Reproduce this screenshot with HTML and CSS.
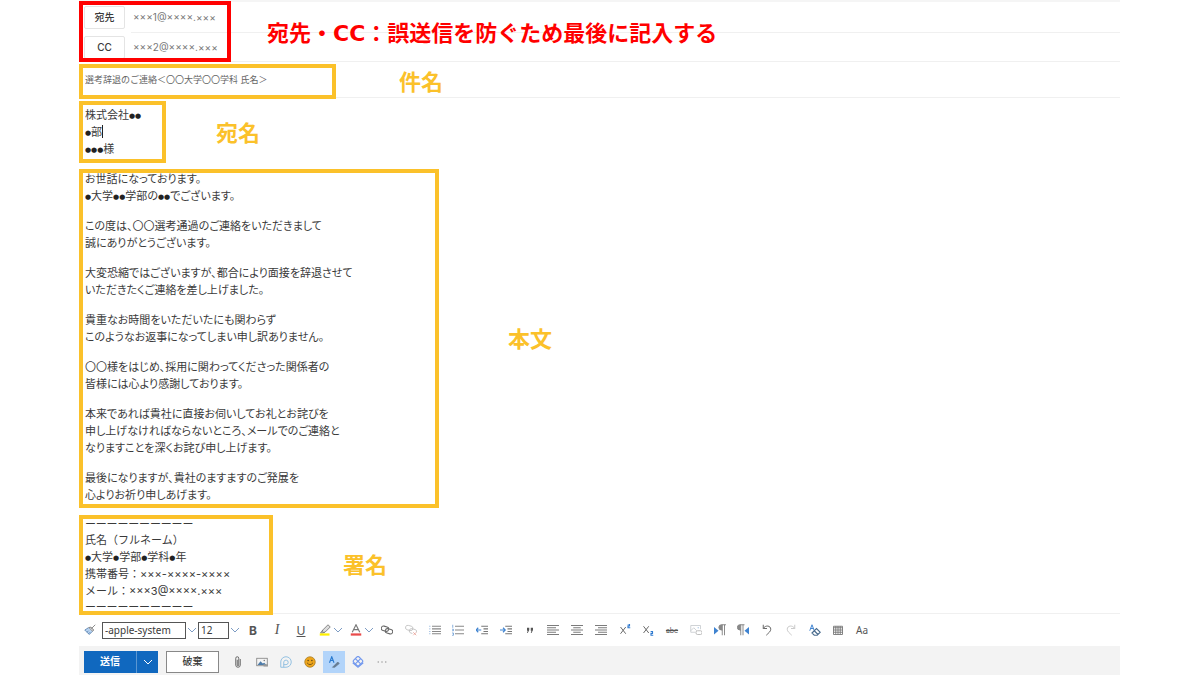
FILE: index.html
```
<!DOCTYPE html>
<html lang="ja">
<head>
<meta charset="utf-8">
<meta name="viewport" content="width=device-width, initial-scale=1">
<title>選考辞退のご連絡</title>
<link rel="stylesheet" href="styles.css">
</head>
<body>
<main class="composer">
  <section class="recipients">
    <div class="recipient">
      <button class="field-button" type="button" id="to">宛先</button>
      <div class="recipient-value"><input class="address" type="text" value="×××1@××××.×××" aria-labelledby="to"></div>
    </div>
    <div class="recipient">
      <button class="field-button" type="button" id="cc">CC</button>
      <div class="recipient-value"><input class="address" type="text" value="×××2@××××.×××" aria-labelledby="cc"></div>
    </div>
    <div class="recipients-frame"></div>
    <strong class="note note-red recipients-note">宛先・CC：誤送信を防ぐため最後に記入する</strong>
  </section>

  <section class="row subject-row">
    <div class="frame subject-frame"><input class="subject" type="text" aria-label="件名" value="選考辞退のご連絡＜〇〇大学〇〇学科 氏名＞"></div>
    <strong class="note subject-note">件名</strong>
  </section>

  <section class="row addressee-row">
    <div class="frame addressee-frame">
      <p>株式会社<span class="dot">●●</span></p>
      <p><span class="dot">●</span>部<span class="caret"></span></p>
      <p><span class="dot">●●●</span>様</p>
    </div>
    <strong class="note addressee-note">宛名</strong>
  </section>

  <section class="row letter-row">
    <div class="frame letter-frame">
      <p>お世話になっております。<br><span class="dot">●</span>大学<span class="dot">●●</span>学部の<span class="dot">●●</span>でございます。</p>
      <p>この度は、〇〇選考通過のご連絡をいただきまして<br>誠にありがとうございます。</p>
      <p>大変恐縮ではございますが、都合により面接を辞退させて<br>いただきたくご連絡を差し上げました。</p>
      <p>貴重なお時間をいただいたにも関わらず<br>このようなお返事になってしまい申し訳ありません。</p>
      <p>〇〇様をはじめ、採用に関わってくださった関係者の<br>皆様には心より感謝しております。</p>
      <p>本来であれば貴社に直接お伺いしてお礼とお詫びを<br>申し上げなければならないところ、メールでのご連絡と<br>なりますことを深くお詫び申し上げます。</p>
      <p>最後になりますが、貴社のますますのご発展を<br>心よりお祈り申しあげます。</p>
    </div>
    <strong class="note letter-note">本文</strong>
  </section>

  <section class="row signature-row">
    <div class="frame signature-frame">
      <p class="rule">ーーーーーーーーーー</p>
      <p>氏名（フルネーム）</p>
      <p><span class="dot">●</span>大学<span class="dot">●</span>学部<span class="dot">●</span>学科<span class="dot">●</span>年</p>
      <p>携帯番号：×××-××××-××××</p>
      <p>メール：×××3@××××.×××</p>
      <p class="rule">ーーーーーーーーーー</p>
    </div>
    <strong class="note signature-note">署名</strong>
  </section>

  <div class="toolbar" role="toolbar" aria-label="書式">
    <button class="tool" type="button" aria-label="書式のコピー"><svg viewBox="0 0 16 16"><path d="M15 1 10 6M9 4l4 4-2 2-5-5z" fill="#ccc" stroke="#666"/><path d="M6 5 1 8l6 6 4-4" fill="#b8d3f1" stroke="#4d78a8"/><path d="m4 11 2-2m0 4 2-2" stroke="#4d78a8"/></svg></button>
    <select class="font-name" aria-label="フォント"><option>-apple-system</option></select>
    <svg class="chevron" viewBox="0 0 10 10"><path d="m1 3 4 4 4-4"/></svg>
    <select class="font-size" aria-label="フォント サイズ"><option>12</option></select>
    <svg class="chevron" viewBox="0 0 10 10"><path d="m1 3 4 4 4-4"/></svg>
    <div class="text-tools">
      <button class="tool bold" type="button" aria-label="太字">B</button>
      <button class="tool italic" type="button" aria-label="斜体">I</button>
      <button class="tool underline" type="button" aria-label="下線">U</button>
    </div>
    <button class="tool color-tool" type="button" aria-label="蛍光ペン"><svg viewBox="0 0 16 16"><path d="m5 8 7-7 3 3-7 7H5zM5 8l-3 4h4l2-2" fill="#ddd" stroke="#666"/><path d="M1 14h13" stroke="#fff000" stroke-width="3"/></svg><svg class="chevron" viewBox="0 0 10 10"><path d="m1 3 4 4 4-4"/></svg></button>
    <button class="tool color-tool" type="button" aria-label="フォントの色"><svg viewBox="0 0 16 16"><path d="M3 11 8 1l5 10M5 7.500h6" stroke="#777" stroke-width="1.500"/><path d="M1 14h14" stroke="#e94b4b" stroke-width="3"/></svg><svg class="chevron" viewBox="0 0 10 10"><path d="m1 3 4 4 4-4"/></svg></button>
    <div class="tool-group">
      <button class="tool" type="button" aria-label="リンク"><svg viewBox="0 0 16 16"><g transform="rotate(15 8 8)" stroke="#666" stroke-width="1.400"><rect x="0" y="4" width="10" height="6" rx="3"/><rect x="6" y="6" width="10" height="6" rx="3"/></g></svg></button>
      <button class="tool" type="button" aria-label="リンクの解除"><svg viewBox="0 0 16 16"><g transform="rotate(15 8 8)"><rect x="0" y="3" width="10" height="6" rx="3" stroke="#bbb"/><path d="M11 12H9a3 3 0 0 1 0-6h4a3 3 0 0 1 3 3" stroke="#bbb"/></g><path d="m11 11 4 4m0-4-4 4" stroke="#e79a8f"/></svg></button>
      <button class="tool" type="button" aria-label="箇条書き"><svg viewBox="0 0 16 16"><path d="M0 3h2M0 6.500h2M0 10h2M0 13h2" stroke="#8fb3dc"/><path d="M4 3h12M4 6.500h12M4 10h12M4 13h12" stroke="#888" stroke-width="1.500"/></svg></button>
      <button class="tool" type="button" aria-label="段落番号"><svg viewBox="0 0 16 16"><path d="M1 1v4M0 7h2v2H0M0 12h2v3H0" stroke="#5f94d0"/><path d="M4 3h12M4 8h12M4 13h12" stroke="#888" stroke-width="1.500"/></svg></button>
      <button class="tool" type="button" aria-label="インデント解除"><svg viewBox="0 0 16 16"><path d="M7 8H0m3-3L0 8l3 3" stroke="#3f83d0" stroke-width="1.500"/><path d="M7 3h9M10 6.500h6M10 10h6M7 13h9" stroke="#777" stroke-width="1.500"/></svg></button>
      <button class="tool" type="button" aria-label="インデント"><svg viewBox="0 0 16 16"><path d="M0 8h7M4 5l3 3-3 3" stroke="#3f83d0" stroke-width="1.500"/><path d="M7 3h9M10 6.500h6M10 10h6M7 13h9" stroke="#777" stroke-width="1.500"/></svg></button>
      <button class="tool" type="button" aria-label="引用"><svg viewBox="0 0 16 16"><path d="M4 5h3v3l-2 4H4l1-3H4zM9 5h3v3l-2 4H9l1-3H9z" fill="#555"/></svg></button>
      <button class="tool" type="button" aria-label="左揃え"><svg viewBox="0 0 16 16"><path d="M0 2h16M0 5h12M0 8h16M0 11h12M0 14h16" stroke="#777" stroke-width="1.300"/></svg></button>
      <button class="tool" type="button" aria-label="中央揃え"><svg viewBox="0 0 16 16"><path d="M0 2h16M3 5h10M0 8h16M3 11h10M0 14h16" stroke="#777" stroke-width="1.300"/></svg></button>
      <button class="tool" type="button" aria-label="右揃え"><svg viewBox="0 0 16 16"><path d="M0 2h16M4 5h12M0 8h16M4 11h12M0 14h16" stroke="#777" stroke-width="1.300"/></svg></button>
      <button class="tool" type="button" aria-label="上付き"><svg viewBox="0 0 16 16"><path d="m2 4 7 9m0-9-7 9" stroke="#666" stroke-width="1.300"/><path d="M11.500 0H14v2.500h-2V5h3" stroke="#2f7ad0" stroke-width="1.500"/></svg></button>
      <button class="tool" type="button" aria-label="下付き"><svg viewBox="0 0 16 16"><path d="m2 3 7 9m0-9-7 9" stroke="#666" stroke-width="1.300"/><path d="M11.500 10H14v2.500h-2V15h3" stroke="#2f7ad0" stroke-width="1.500"/></svg></button>
      <button class="tool strike" type="button" aria-label="取り消し線">abc</button>
      <button class="tool" type="button" aria-label="画像"><svg viewBox="0 0 16 16"><path d="M7 11H1V2h13v5M1 9l4-4 4 4" stroke="#c0c4c8"/><rect x="8" y="9" width="8" height="5" rx="2" stroke="#aaa"/><circle cx="11" cy="5" r="1" fill="#b5cde8"/></svg></button>
      <button class="tool" type="button" aria-label="左から右"><svg viewBox="0 0 16 16"><path d="m0 4 6 5-6 5z" fill="#3f83d0"/><path d="M11 15V1m3 14V1m2 0h-6a3 3 0 0 0 0 7h1" stroke="#666"/><path d="M10 1h1v7h-1a3 3 0 0 1 0-7" fill="#888"/></svg></button>
      <button class="tool" type="button" aria-label="右から左"><svg viewBox="0 0 16 16"><path d="m16 4-6 5 6 5z" fill="#3f83d0"/><path d="M5 15V1m3 14V1m2 0H4a3 3 0 0 0 0 7h1" stroke="#666"/><path d="M4 1h1v7H4a3 3 0 0 1 0-7" fill="#888"/></svg></button>
      <button class="tool" type="button" aria-label="元に戻す"><svg viewBox="0 0 16 16"><path d="M3 1v5h5M3 6c3-5 10-4 10 1 0 3-3 5-6 8" stroke="#666" stroke-width="1.300"/></svg></button>
      <button class="tool" type="button" aria-label="やり直し"><svg viewBox="0 0 16 16"><path d="M13 1v5H8m5 0C10 1 3 2 3 7c0 3 3 5 6 8" stroke="#c8c8c8" stroke-width="1.300"/></svg></button>
      <button class="tool" type="button" aria-label="書式のクリア"><svg viewBox="0 0 16 16"><path d="m1 9 3-8 3 8M2 6h4" stroke="#3f83d0" stroke-width="1.300"/><path d="m4 12 6-6 5 5-4 4H7zM7 9l5 5" stroke="#496b8d" stroke-width="1.500"/></svg></button>
      <button class="tool" type="button" aria-label="表"><svg viewBox="0 0 16 16"><path d="M2 3h12v11H2zM2 5h12M2 8h12M2 11h12M5 3v11M8 3v11M11 3v11" stroke="#777" stroke-width="1.200"/></svg></button>
      <button class="tool case" type="button" aria-label="大文字と小文字">Aa</button>
    </div>
  </div>

  <footer class="actions">
    <div class="send-group">
      <button class="send" type="button">送信</button>
      <button class="send-more" type="button" aria-label="送信オプション"><svg class="chevron" viewBox="0 0 10 10"><path d="m1 3 4 4 4-4"/></svg></button>
    </div>
    <button class="discard" type="button">破棄</button>
    <div class="insert-tools">
      <button class="tool" type="button" aria-label="添付"><svg viewBox="0 0 16 16"><path d="M11 4v8a3 3 0 0 1-6 0V3a2 2 0 0 1 4 0v9a1 1 0 0 1-2 0V5" stroke="#666" stroke-width="1.300"/></svg></button>
      <button class="tool" type="button" aria-label="画像の挿入"><svg viewBox="0 0 16 16"><rect x="1" y="3" width="14" height="10" stroke="#777"/><path d="m2 12 4-5 3 3 2-1 3 3z" fill="#4c7ba9"/><circle cx="11" cy="6" r="1" fill="#777"/><path d="M10 11h6v3h-6z" fill="#999"/></svg></button>
      <button class="tool" type="button" aria-label="Loop"><svg viewBox="0 0 16 16"><path d="M1 15V8a7 7 0 1 1 7 7zM5 15V8a3 3 0 1 1 3 3.500H5" stroke="#8abce0" stroke-width="1.200"/></svg></button>
      <button class="tool" type="button" aria-label="絵文字"><svg viewBox="0 0 16 16"><circle cx="8" cy="8" r="7" fill="#eea51b" stroke="#a67b24"/><circle cx="5.500" cy="6" r="1" fill="#594316"/><circle cx="10.500" cy="6" r="1" fill="#594316"/><path d="M4 9q4 5 8 0" stroke="#594316"/></svg></button>
      <button class="tool active" type="button" aria-label="書式設定" aria-pressed="true"><svg viewBox="0 0 16 16"><path d="m2 9 3-8 3 8M3 6h4" stroke="#2879cf" stroke-width="1.500"/><path d="m7 14 6-6 2 2-6 5H6z" fill="#667b90" stroke="#667b90"/></svg></button>
      <button class="tool" type="button" aria-label="アプリ"><svg viewBox="0 0 16 16"><g transform="rotate(45 8 7)" stroke="#7298ee" stroke-width="1.500"><rect x="3" y="2" width="10" height="10" rx="2"/><path d="M3 7h10M8 2v10"/></g><path d="m1 9 7 6 7-6" stroke="#7298ee" stroke-width="1.500"/></svg></button>
      <button class="tool" type="button" aria-label="その他"><svg viewBox="0 0 16 16"><g fill="#999"><circle cx="3" cy="8" r="1"/><circle cx="8" cy="8" r="1"/><circle cx="13" cy="8" r="1"/></g></svg></button>
    </div>
  </footer>
</main>
</body>
</html>
```

FILE: styles.css
```
* { box-sizing: border-box; }
body {
  margin: 0;
  background: #fff;
  color: #3a3a3a;
  font: 11px/17px Inter, "Noto Sans CJK JP", sans-serif;
}
p { margin: 0; }
button, input, select { font: inherit; color: inherit; margin: 0; padding: 0; }
button { border: 0; background: none; }
svg { fill: none; flex: none; }

.composer {
  margin: 0 80px 0 79px;
  border-top: 2px solid #f5f5f5;
}

/* annotation frames and captions */
.frame {
  position: relative;
  outline: 4px solid #fbc12a;
  outline-offset: -4px;
  padding-left: 6px;
  white-space: nowrap;
}
.note {
  color: #fbc12a;
  font: 700 22px/32px "DejaVu Sans", "Noto Sans CJK JP", sans-serif;
  white-space: nowrap;
  padding-top: 2px;
}
.note-red { color: #f00; }
.row { display: flex; align-items: center; }

.recipients { position: relative; }
.recipient { display: flex; align-items: center; height: 31px; padding-left: 5px; }
.recipient + .recipient { height: 29px; border-bottom: 1px solid #f0f0f0; }
.field-button {
  width: 41px;
  height: 23px;
  border: 1px solid #e4e4e4;
  border-radius: 2px;
  font-size: 10px;
  font-weight: 500;
}
.recipient-value {
  display: flex;
  align-items: center;
  flex: 1;
  height: 100%;
  margin-left: 6px;
  padding-left: 2px;
  border-bottom: 1px solid #f0f0f0;
}
.recipient + .recipient .recipient-value { border-bottom: 0; }
.address { width: 90px; height: 20px; border: 0; background: none; color: #777; font-size: 10px; }
.recipients-frame {
  position: absolute;
  top: -1px;
  left: 0;
  width: 152px;
  height: 61px;
  border: 4px solid #f00;
  pointer-events: none;
}
.recipients-note { position: absolute; top: 14px; left: 188px; }

.subject-row { height: 36px; border-bottom: 1px solid #f0f0f0; }
.subject-frame { width: 257px; height: 35px; margin-top: 3px; padding-top: 4px; }
.subject { display: block; width: 230px; height: 24px; border: 0; background: none; color: #666; font-size: 9px; }
.subject-note { margin: 4px 0 0 63px; }

.addressee-row { margin-top: 3px; }
.addressee-frame { width: 87px; padding-top: 6px; padding-bottom: 5px; }
.addressee-note { margin: 2px 0 0 50px; }
.dot { font: 7px/8px "DejaVu Sans", sans-serif; vertical-align: 1px; color: #222; }
.caret { display: inline-block; width: 1px; height: 13px; background: #222; vertical-align: -2px; }

.letter-row { margin-top: 6px; }
.letter-frame {
  width: 360px;
  padding-top: 2px;
  padding-bottom: 4px;
  font-feature-settings: "palt";
}
.letter-frame p + p { margin-top: 13px; }
.letter-note { margin-left: 69px; }

.signature-row { margin: 7px 0 -2px; }
.signature-frame { width: 194px; padding-top: 2px; }
.rule { font-size: 11px; line-height: 15px; font-feature-settings: "palt"; }
.signature-note { margin-left: 70px; }

.toolbar {
  display: flex;
  align-items: center;
  height: 33px;
  border-top: 1px solid #f0f0f0;
}
.tool { display: flex; align-items: center; justify-content: center; width: 22px; height: 22px; color: #555; }
.tool svg { width: 12px; height: 12px; }
.chevron { width: 10px; height: 10px; stroke: #7d9cc4; }
.font-name, .font-size {
  appearance: none;
  height: 17px;
  border: 1px solid #555;
  border-radius: 0;
  background: #fff;
  padding-left: 2px;
  font: 10px/14px "Noto Sans", sans-serif;
}
.font-name { width: 84px; margin: 0 1px; }
.font-size { width: 31px; margin: 0 1px; }
.text-tools { display: flex; gap: 2px; margin-left: 2px; }
.bold { font-weight: 700; font-size: 12px; }
.italic { font: italic 14px "Liberation Serif", serif; }
.underline { font-size: 12px; text-decoration: underline; }
.color-tool { width: 31px; justify-content: flex-end; }
.color-tool svg.chevron { width: 10px; height: 10px; margin-left: 2px; }
.tool-group { display: flex; justify-content: space-between; width: 497px; margin-left: 2px; }
.strike { font-size: 7px; text-decoration: line-through; }
.case { font: 10px "Noto Sans", sans-serif; }

.actions {
  display: flex;
  align-items: center;
  gap: 8px;
  height: 29px;
  padding: 2px 0 0 5px;
  background: #f3f3f3;
}
.send-group { display: flex; height: 22px; background: #1068bf; color: #fff; }
.send { width: 52px; font-size: 10px; font-weight: 700; }
.send-more { display: flex; align-items: center; justify-content: center; width: 22px; border-left: 1px solid #5b97d2; }
.send-more .chevron { stroke: #fff; }
.discard { width: 53px; height: 22px; border: 1px solid #888; background: #fff; font-size: 10px; font-weight: 500; }
.insert-tools { display: flex; gap: 2px; }
.active { background: #b2d4fa; }
```
